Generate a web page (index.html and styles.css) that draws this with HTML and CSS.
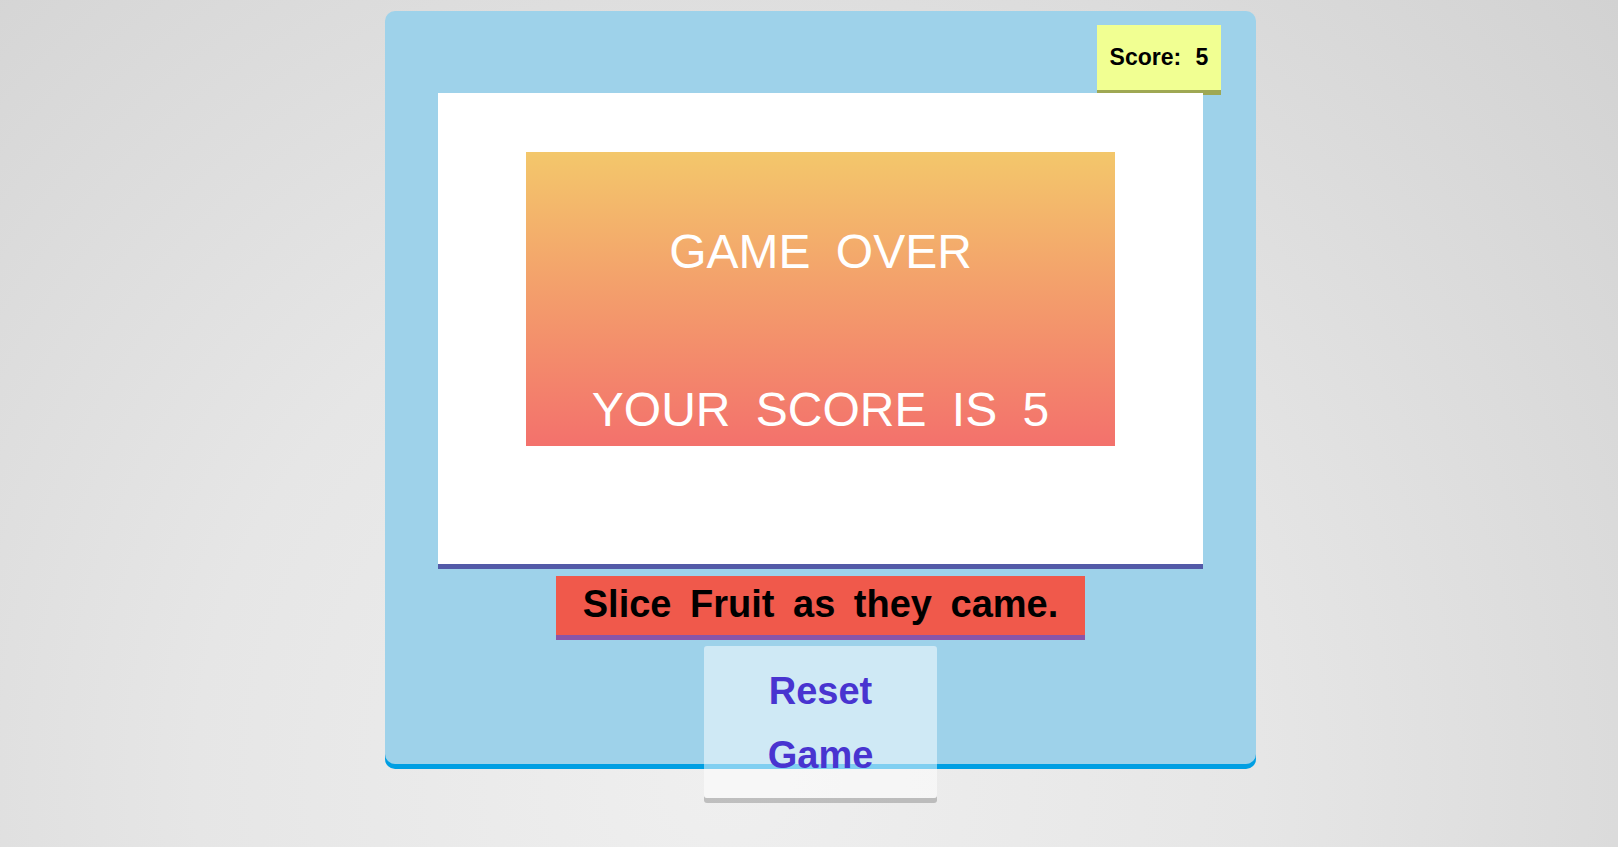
FILE: index.html
```
<!DOCTYPE html>
<html lang="en">
<head>
<meta charset="utf-8">
<title>Fruit Slice</title>
<link rel="stylesheet" href="styles.css">
</head>
<body>
<div class="page">
  <div class="container">
    <div class="scorebox">Score: <span class="scorevalue">5</span></div>
    <div class="playarea">
      <div class="gameover">
        <p class="gameover-title">Game Over</p>
        <p class="gameover-score">Your score is 5</p>
      </div>
    </div>
    <div class="instruction">Slice Fruit as they came.</div>
    <div class="startreset">Reset Game</div>
  </div>
</div>
</body>
</html>
```
FILE: styles.css
```
html {
  height: 100%;
  background: radial-gradient(circle at 45% 92%, #efefef 0%, #e6e6e6 45%, #d2d2d2 100%);
}

body {
  margin: 0;
  min-height: 100%;
  font-family: "Liberation Sans", Arial, sans-serif;
}

.page {
  padding: 11px 0 0 23px;
}

.container {
  position: relative;
  box-sizing: border-box;
  width: 871px;
  height: 753px;
  margin: 0 auto;
  padding-top: 82px;
  background: #9ed2ea;
  border-radius: 10px;
  box-shadow: 0 5px 0 #009fe3;
}

.scorebox {
  position: absolute;
  left: 712px;
  top: 14px;
  width: 124px;
  height: 65px;
  background: #f1ff92;
  box-shadow: 0 5px 0 #9fa853;
  color: #000;
  font-weight: bold;
  font-size: 23px;
  line-height: 65px;
  word-spacing: 8px;
  text-align: center;
  white-space: nowrap;
}

.playarea {
  position: relative;
  width: 765px;
  height: 471px;
  margin: 0 auto;
  background: #fff;
  box-shadow: 0 5px 0 #535aa8;
}

.gameover {
  position: absolute;
  left: 88px;
  top: 59px;
  box-sizing: border-box;
  width: 589px;
  height: 294px;
  padding-top: 72px;
  background: linear-gradient(#f3c76b, #f3716c);
  color: #fff;
  font-size: 48px;
  line-height: 56px;
  word-spacing: 12px;
  text-align: center;
  text-transform: uppercase;
}

.gameover p {
  margin: 0;
}

.gameover .gameover-score {
  margin-top: 102px;
}

.instruction {
  box-sizing: border-box;
  width: 529px;
  height: 59px;
  margin: 12px auto 0;
  background: #f0594b;
  box-shadow: 0 5px 0 #8955a8;
  color: #000;
  font-weight: bold;
  font-size: 38px;
  line-height: 56px;
  word-spacing: 8px;
  text-align: center;
}

.startreset {
  box-sizing: border-box;
  width: 233px;
  margin: 11px auto 0;
  padding: 13px 60px 11px;
  background: rgba(255, 255, 255, 0.5);
  border-radius: 3px;
  box-shadow: 0 5px 0 rgba(0, 0, 0, 0.2);
  color: #4834d0;
  font-weight: bold;
  font-size: 38px;
  line-height: 64px;
  text-align: center;
}
```
